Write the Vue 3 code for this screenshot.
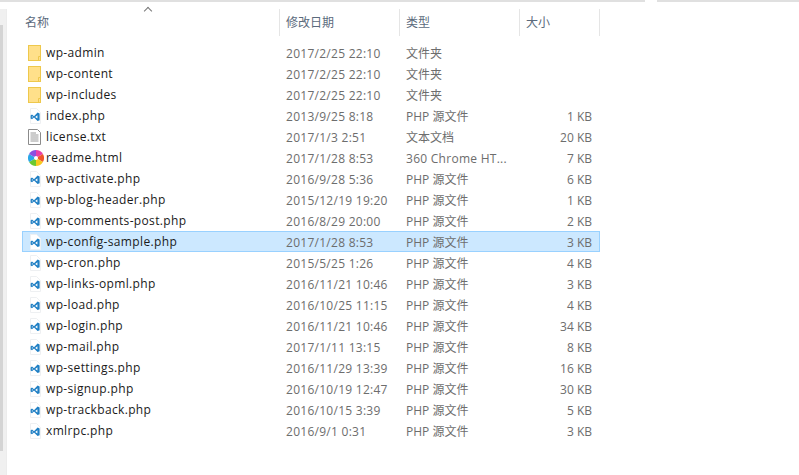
<script setup>
const files = [
  { name: 'wp-admin', date: '2017/2/25 22:10', type: '文件夹', size: '', icon: 'folder' },
  { name: 'wp-content', date: '2017/2/25 22:10', type: '文件夹', size: '', icon: 'folder' },
  { name: 'wp-includes', date: '2017/2/25 22:10', type: '文件夹', size: '', icon: 'folder' },
  { name: 'index.php', date: '2013/9/25 8:18', type: 'PHP 源文件', size: '1 KB', icon: 'php' },
  { name: 'license.txt', date: '2017/1/3 2:51', type: '文本文档', size: '20 KB', icon: 'txt' },
  { name: 'readme.html', date: '2017/1/28 8:53', type: '360 Chrome HT...', size: '7 KB', icon: 'html' },
  { name: 'wp-activate.php', date: '2016/9/28 5:36', type: 'PHP 源文件', size: '6 KB', icon: 'php' },
  { name: 'wp-blog-header.php', date: '2015/12/19 19:20', type: 'PHP 源文件', size: '1 KB', icon: 'php' },
  { name: 'wp-comments-post.php', date: '2016/8/29 20:00', type: 'PHP 源文件', size: '2 KB', icon: 'php' },
  { name: 'wp-config-sample.php', date: '2017/1/28 8:53', type: 'PHP 源文件', size: '3 KB', icon: 'php', selected: true },
  { name: 'wp-cron.php', date: '2015/5/25 1:26', type: 'PHP 源文件', size: '4 KB', icon: 'php' },
  { name: 'wp-links-opml.php', date: '2016/11/21 10:46', type: 'PHP 源文件', size: '3 KB', icon: 'php' },
  { name: 'wp-load.php', date: '2016/10/25 11:15', type: 'PHP 源文件', size: '4 KB', icon: 'php' },
  { name: 'wp-login.php', date: '2016/11/21 10:46', type: 'PHP 源文件', size: '34 KB', icon: 'php' },
  { name: 'wp-mail.php', date: '2017/1/11 13:15', type: 'PHP 源文件', size: '8 KB', icon: 'php' },
  { name: 'wp-settings.php', date: '2016/11/29 13:39', type: 'PHP 源文件', size: '16 KB', icon: 'php' },
  { name: 'wp-signup.php', date: '2016/10/19 12:47', type: 'PHP 源文件', size: '30 KB', icon: 'php' },
  { name: 'wp-trackback.php', date: '2016/10/15 3:39', type: 'PHP 源文件', size: '5 KB', icon: 'php' },
  { name: 'xmlrpc.php', date: '2016/9/1 0:31', type: 'PHP 源文件', size: '3 KB', icon: 'php' },
]
const wedges = ['#e83fa8', '#f0562a', '#f8c91d', '#6cc92f', '#2aa7e8', '#8a4fe0']
function wedgePath(i) {
  const a = (i * 60 - 90) * Math.PI / 180
  const b = ((i + 1) * 60 - 90) * Math.PI / 180
  return `M8 8L${8 + 8 * Math.cos(a)} ${8 + 8 * Math.sin(a)}A8 8 0 0 1 ${8 + 8 * Math.cos(b)} ${8 + 8 * Math.sin(b)}Z`
}
</script>

<template>
  <div class="explorer">
    <div class="top-line">
      <div class="seg left"></div>
      <div class="seg right"></div>
    </div>
    <div class="body">
      <div class="side"><div class="thumb"></div></div>
      <div class="main">
        <div class="head">
          <div class="col name">名称<span class="sort"></span></div>
          <div class="col date">修改日期</div>
          <div class="col type">类型</div>
          <div class="col size">大小</div>
        </div>
        <div class="list">
          <div v-for="f in files" :key="f.name" class="row" :class="{ selected: f.selected }">
            <div class="cell name">
              <svg v-if="f.icon == 'folder'" class="icon" viewBox="0 0 16 16">
                <rect x="0.5" y="0.5" width="12" height="15" fill="#ffe08a" stroke="#eec84c" />
                <path d="M10.5 15.5V11.5H12.5" fill="none" stroke="#eec84c" />
              </svg>
              <svg v-else-if="f.icon == 'php'" class="icon" viewBox="0 0 16 16">
                <path d="M2.5 0.5H8.5L12.5 4.5V15.5H2.5Z" fill="#fff" stroke="#eef0f2" />
                <path d="M9.6 4.6L6 8.2L4 6.6L2.6 7.4V10.4L4 11.2L6 9.6L9.6 13L11.6 12.2V5.4ZM9.4 7.2V10.6L7.2 8.9ZM3.9 8L5 8.9L3.9 9.8Z" fill="#1f7fc4" fill-rule="evenodd" />
              </svg>
              <svg v-else-if="f.icon == 'txt'" class="icon" viewBox="0 0 16 16">
                <path d="M0.5 0.5H9.5L12.5 3.5V15.5H0.5Z" fill="#fff" stroke="#8b8b8b" />
                <path d="M2.5 4H8M2.5 6H10.5M2.5 8H10.5M2.5 10H10.5M2.5 12H10.5" stroke="#9a9a9a" />
              </svg>
              <svg v-else class="icon" viewBox="0 0 16 16">
                <path v-for="(c, i) in wedges" :key="c" :d="wedgePath(i)" :fill="c" />
                <circle cx="8" cy="8" r="2" fill="#fff" />
              </svg>
              <span class="fname">{{ f.name }}</span>
            </div>
            <div class="cell date">{{ f.date }}</div>
            <div class="cell type" :class="{ wide: f.icon == 'html' }">{{ f.type }}</div>
            <div class="cell size">{{ f.size }}</div>
          </div>
        </div>
      </div>
    </div>
  </div>
</template>

<style scoped>
.explorer {
  width: 799px;
  height: 475px;
  overflow: hidden;
  background: #fff;
  font-family: "Open Sans", "Noto Sans CJK SC", sans-serif;
  font-size: 12px;
}
.top-line {
  display: flex;
  height: 2px;
}
.seg {
  height: 2px;
  background: #e0e0e0;
}
.seg.left {
  width: 645px;
}
.seg.right {
  width: 142px;
  margin-left: 12px;
}
.body {
  display: flex;
  height: 473px;
}
.side {
  width: 7px;
  margin-top: 7px;
  background: #f0f0f0;
  border-right: 1px solid #ececec;
  box-sizing: border-box;
}
.thumb {
  width: 3px;
  height: 426px;
  margin-top: 16px;
  background: #d4d4d4;
}
.main {
  padding-top: 7px;
}
.head {
  display: flex;
  height: 27px;
  margin-bottom: 6px;
  color: #5b6a7c;
}
.col {
  position: relative;
  line-height: 27px;
  border-right: 1px solid #e5e5e5;
  box-sizing: border-box;
}
.col.name {
  width: 273px;
  padding-left: 18px;
}
.col.date {
  width: 120px;
  padding-left: 6px;
}
.col.type {
  width: 120px;
  padding-left: 6px;
}
.col.size {
  width: 80px;
  padding-left: 6px;
}
.sort {
  position: absolute;
  left: 138px;
  top: -1px;
  width: 5px;
  height: 5px;
  border-top: 1px solid #777;
  border-left: 1px solid #777;
  transform: rotate(45deg);
}
.list {
  padding-left: 15px;
}
.row {
  display: flex;
  width: 578px;
  height: 21px;
  line-height: 21px;
  box-sizing: border-box;
  border: 1px solid transparent;
}
.row.selected {
  background: #cce8ff;
  border-color: #99d1ff;
}
.cell {
  white-space: nowrap;
  color: #6d6d6d;
}
.cell.name {
  width: 263px;
  display: flex;
  align-items: center;
  gap: 2px;
  padding-left: 5px;
  box-sizing: border-box;
  color: #1a1a1a;
}
.fname {
  letter-spacing: 0.35px;
}
.cell.date {
  width: 120px;
  letter-spacing: 0.27px;
}
.cell.type {
  width: 114px;
}
.cell.type.wide {
  letter-spacing: 0.27px;
}
.cell.size {
  width: 73px;
  text-align: right;
  padding-right: 1px;
  box-sizing: border-box;
}
.icon {
  width: 16px;
  height: 16px;
  flex: none;
}
</style>
